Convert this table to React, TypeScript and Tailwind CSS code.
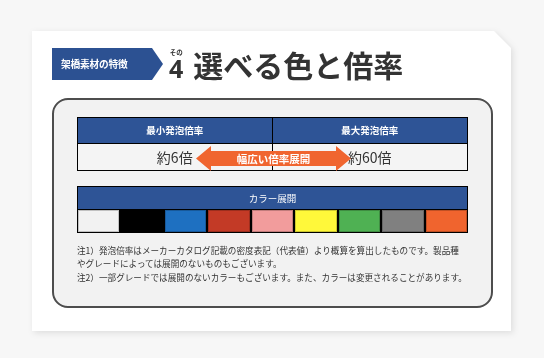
import React from 'react';

const swatches = [
    '#f2f2f2',
    '#000000',
    '#1e70c1',
    '#c33a26',
    '#f29c9c',
    '#fff83a',
    '#4fb153',
    '#808080',
    '#f0642e',
];

const font = { fontFamily: '"Noto Sans CJK JP", "Noto Sans", sans-serif' };

export default function App() {
    return (
        <div className="h-[358px] w-[544px] bg-[#f7f7f7] pl-[32px] pt-[31px]" style={font}>
            {/* カード本体（右上の角を斜めにカット） */}
            <div className="w-[479px] drop-shadow-[2px_2px_3px_rgba(0,0,0,0.10)]">
                <div className="h-[300px] bg-white px-[20px] pt-[17px] [clip-path:polygon(0_0,462px_0,100%_17px,100%_100%,0_100%)]">
                    {/* 見出し */}
                    <div className="flex items-center">
                        <div className="flex h-[32px] w-[111px] items-center bg-[#2c5192] pl-[9px] [clip-path:polygon(0_0,100px_0,100%_50%,100px_100%,0_100%)]">
                            <span className="text-[9.7px] font-bold tracking-[-0.2px] text-white">架橋素材の特徴</span>
                        </div>
                        <div className="ml-[6px] flex items-end text-[#333]">
                            <div className="flex flex-col items-center">
                                <span className="text-[6.5px] leading-none font-bold">その</span>
                                <span className="mt-[3px] text-[25px] leading-[21px] font-bold" style={{ fontFamily: '"Noto Sans", sans-serif' }}>4</span>
                            </div>
                            <span className="ml-[10px] text-[30px] leading-[30px] font-bold">選べる色と倍率</span>
                        </div>
                    </div>

                    {/* 角丸ボックス */}
                    <div className="mt-[18px] h-[210px] w-[441px] rounded-[16px] border-[2.5px] border-[#4d4d4d] bg-[#f2f2f2] px-[23px] pt-[17px]">
                        {/* 発泡倍率 */}
                        <div className="relative border-[1.5px] border-black">
                            <div className="grid grid-cols-2 bg-[#2e5496] text-[9.5px] font-bold text-white">
                                <div className="flex h-[25px] items-center justify-center border-r-[1.5px] border-black">最小発泡倍率</div>
                                <div className="flex h-[25px] items-center justify-center">最大発泡倍率</div>
                            </div>
                            <div className="grid grid-cols-2 border-t-[1.5px] border-black bg-[#f4f4f4] text-[14px] text-[#333]">
                                <div className="flex h-[26px] items-center justify-center border-r-[1.5px] border-black">約6倍</div>
                                <div className="flex h-[26px] items-center justify-center">約60倍</div>
                            </div>
                            {/* 幅広い倍率展開の矢印 */}
                            <div className="absolute left-[118px] top-[28px] flex h-[25px] w-[155px] items-center justify-center bg-[#f0652f] [clip-path:polygon(0_50%,15px_0,15px_5px,140px_5px,140px_0,100%_50%,140px_100%,140px_20px,15px_20px,15px_100%)]">
                                <span className="text-[10.5px] font-bold text-white">幅広い倍率展開</span>
                            </div>
                        </div>

                        {/* カラー展開 */}
                        <div className="mt-[15px] border-[1.5px] border-black">
                            <div className="flex h-[22px] items-center justify-center bg-[#2e5496] text-[9.5px] text-white">カラー展開</div>
                            <div className="grid grid-cols-9 gap-[2px] border-t-[1.5px] border-black bg-black">
                                {swatches.map((c) => (
                                    <div key={c} className="h-[22px] border border-black/20" style={{ backgroundColor: c }} />
                                ))}
                            </div>
                        </div>

                        {/* 注記 */}
                        <p className="mt-[11px] whitespace-nowrap text-[8.6px] leading-[13.3px] text-[#333]">
                            注1）発泡倍率はメーカーカタログ記載の密度表記（代表値）より概算を算出したものです。製品種
                            <br />
                            やグレードによっては展開のないものもございます。
                            <br />
                            注2）一部グレードでは展開のないカラーもございます。また、カラーは変更されることがあります。
                        </p>
                    </div>
                </div>
            </div>
        </div>
    );
}
